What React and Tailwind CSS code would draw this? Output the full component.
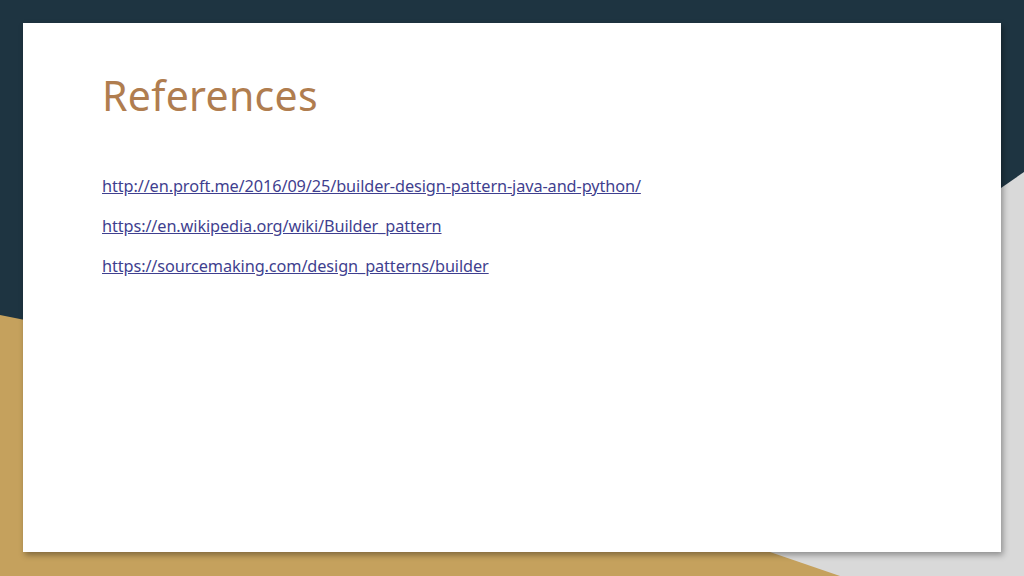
export default function App() {
  const links = [
    "http://en.proft.me/2016/09/25/builder-design-pattern-java-and-python/",
    "https://en.wikipedia.org/wiki/Builder_pattern",
    "https://sourcemaking.com/design_patterns/builder",
  ];
  return (
    <div className="relative w-[1024px] h-[576px] overflow-hidden bg-[#1e3441]">
      <svg className="absolute inset-0" width="1024" height="576" viewBox="0 0 1024 576">
        <polygon points="0,315 1024,520 1024,576 0,576" fill="#c5a15d" />
        <polygon points="1024,172 1001,188 770,552 840,576 1024,576" fill="#d9d9d9" />
      </svg>
      <div className="relative p-[23px] pr-[23px] h-full">
        <div className="bg-white w-[978px] h-[529px] shadow-[2px_3px_6px_rgba(0,0,0,0.35)] pl-[102px] pt-[52px] font-['Lato',sans-serif] -ml-0">
          <h1 className="text-[41px] text-[#b07d4f] font-normal leading-none -ml-[23px] tracking-[0.3px]">References</h1>
          <div className="-ml-[23px] mt-[60px] flex flex-col gap-[20px]">
            {links.map((l) => (
              <a key={l} className="text-[16.3px] leading-[20px] text-[#3f3f8f] underline tracking-[-0.1px]">{l}</a>
            ))}
          </div>
        </div>
      </div>
    </div>
  );
}
